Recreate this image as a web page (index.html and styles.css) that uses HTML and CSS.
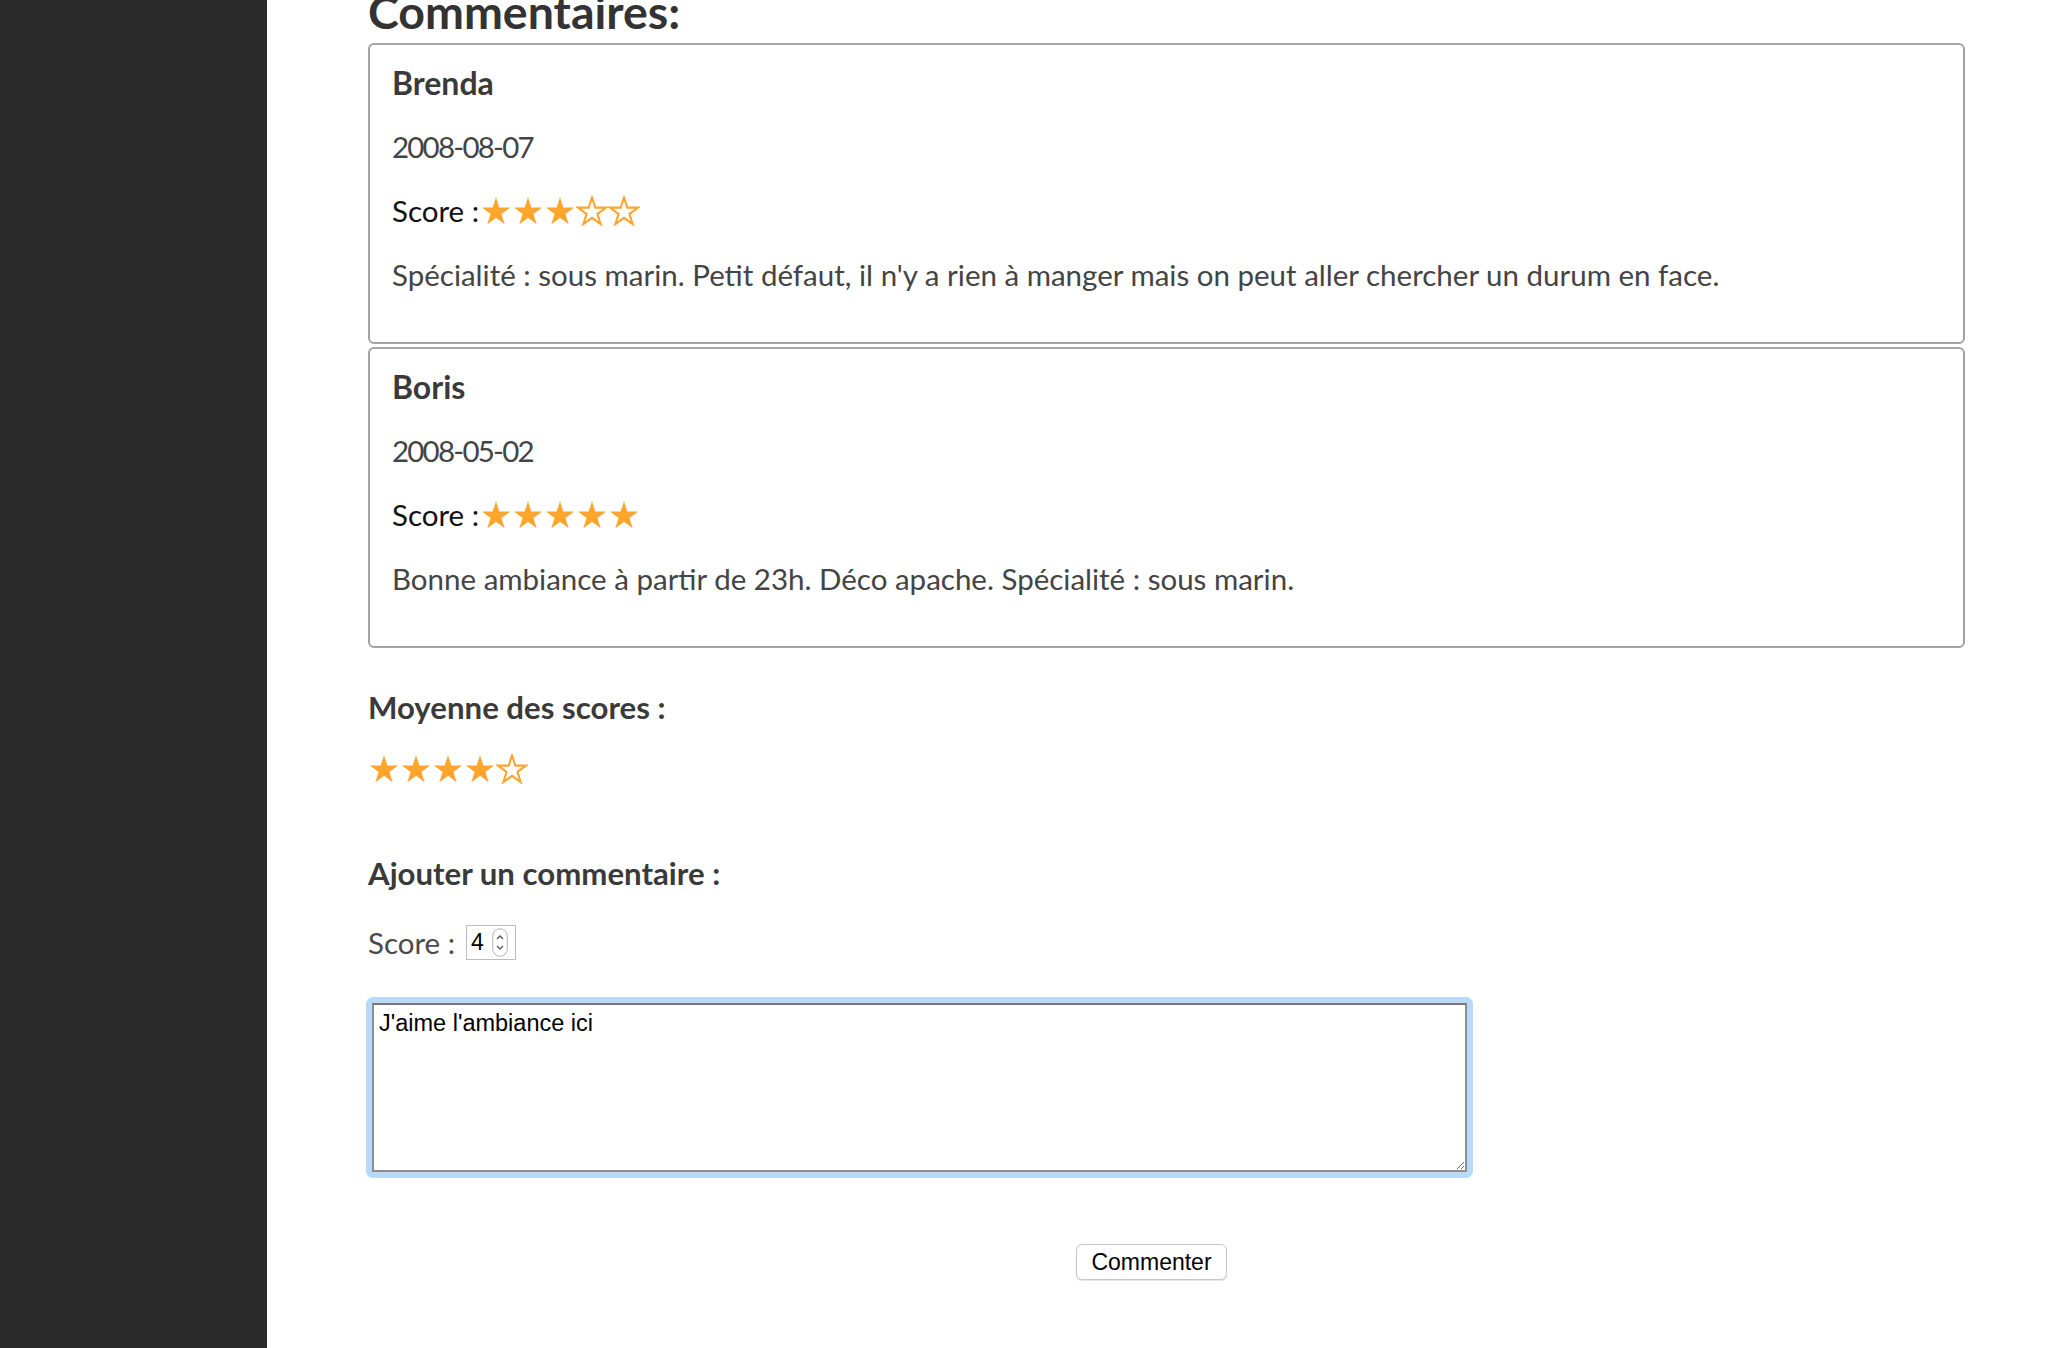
FILE: index.html
```html
<!DOCTYPE html>
<html lang="fr">
<head>
<meta charset="utf-8">
<title>Commentaires</title>
<link rel="stylesheet" href="styles.css">
</head>
<body>
<div class="layout">
  <aside class="sidebar"></aside>
  <main class="main">
    <h2 class="title">Commentaires:</h2>

    <div class="comment">
      <div class="author">Brenda</div>
      <div class="line date">2008-08-07</div>
      <div class="line score">Score :<span class="stars">
        <svg class="star full" viewBox="-4 -4 108 100"><polygon points="50,0 61.23,34.55 97.55,34.55 68.17,55.9 79.39,90.45 50,69.1 20.61,90.45 31.83,55.9 2.45,34.55 38.77,34.55"/></svg><svg class="star full" viewBox="-4 -4 108 100"><polygon points="50,0 61.23,34.55 97.55,34.55 68.17,55.9 79.39,90.45 50,69.1 20.61,90.45 31.83,55.9 2.45,34.55 38.77,34.55"/></svg><svg class="star full" viewBox="-4 -4 108 100"><polygon points="50,0 61.23,34.55 97.55,34.55 68.17,55.9 79.39,90.45 50,69.1 20.61,90.45 31.83,55.9 2.45,34.55 38.77,34.55"/></svg><svg class="star empty" viewBox="-4 -4 108 100"><polygon points="50,0 61.23,34.55 97.55,34.55 68.17,55.9 79.39,90.45 50,69.1 20.61,90.45 31.83,55.9 2.45,34.55 38.77,34.55"/></svg><svg class="star empty" viewBox="-4 -4 108 100"><polygon points="50,0 61.23,34.55 97.55,34.55 68.17,55.9 79.39,90.45 50,69.1 20.61,90.45 31.83,55.9 2.45,34.55 38.77,34.55"/></svg>
      </span></div>
      <div class="line">Spécialité : sous marin. Petit défaut, il n'y a rien à manger mais on peut aller chercher un durum en face.</div>
    </div>

    <div class="comment">
      <div class="author">Boris</div>
      <div class="line date">2008-05-02</div>
      <div class="line score">Score :<span class="stars">
        <svg class="star full" viewBox="-4 -4 108 100"><polygon points="50,0 61.23,34.55 97.55,34.55 68.17,55.9 79.39,90.45 50,69.1 20.61,90.45 31.83,55.9 2.45,34.55 38.77,34.55"/></svg><svg class="star full" viewBox="-4 -4 108 100"><polygon points="50,0 61.23,34.55 97.55,34.55 68.17,55.9 79.39,90.45 50,69.1 20.61,90.45 31.83,55.9 2.45,34.55 38.77,34.55"/></svg><svg class="star full" viewBox="-4 -4 108 100"><polygon points="50,0 61.23,34.55 97.55,34.55 68.17,55.9 79.39,90.45 50,69.1 20.61,90.45 31.83,55.9 2.45,34.55 38.77,34.55"/></svg><svg class="star full" viewBox="-4 -4 108 100"><polygon points="50,0 61.23,34.55 97.55,34.55 68.17,55.9 79.39,90.45 50,69.1 20.61,90.45 31.83,55.9 2.45,34.55 38.77,34.55"/></svg><svg class="star full" viewBox="-4 -4 108 100"><polygon points="50,0 61.23,34.55 97.55,34.55 68.17,55.9 79.39,90.45 50,69.1 20.61,90.45 31.83,55.9 2.45,34.55 38.77,34.55"/></svg>
      </span></div>
      <div class="line">Bonne ambiance à partir de 23h. Déco apache. Spécialité : sous marin.</div>
    </div>

    <h3 class="subhead">Moyenne des scores :</h3>
    <div class="stars avg"><svg class="star full" viewBox="-4 -4 108 100"><polygon points="50,0 61.23,34.55 97.55,34.55 68.17,55.9 79.39,90.45 50,69.1 20.61,90.45 31.83,55.9 2.45,34.55 38.77,34.55"/></svg><svg class="star full" viewBox="-4 -4 108 100"><polygon points="50,0 61.23,34.55 97.55,34.55 68.17,55.9 79.39,90.45 50,69.1 20.61,90.45 31.83,55.9 2.45,34.55 38.77,34.55"/></svg><svg class="star full" viewBox="-4 -4 108 100"><polygon points="50,0 61.23,34.55 97.55,34.55 68.17,55.9 79.39,90.45 50,69.1 20.61,90.45 31.83,55.9 2.45,34.55 38.77,34.55"/></svg><svg class="star full" viewBox="-4 -4 108 100"><polygon points="50,0 61.23,34.55 97.55,34.55 68.17,55.9 79.39,90.45 50,69.1 20.61,90.45 31.83,55.9 2.45,34.55 38.77,34.55"/></svg><svg class="star empty" viewBox="-4 -4 108 100"><polygon points="50,0 61.23,34.55 97.55,34.55 68.17,55.9 79.39,90.45 50,69.1 20.61,90.45 31.83,55.9 2.45,34.55 38.77,34.55"/></svg></div>

    <h3 class="subhead add">Ajouter un commentaire :</h3>
    <form class="form">
      <div class="score-row">
        <label class="score-label">Score :</label>
        <span class="numbox"><span class="numval">4</span><svg class="spin" viewBox="0 0 16 29"><rect x="0.75" y="0.75" width="14.5" height="27.5" rx="7.25" ry="7.25"/><polyline points="5,11 8,8 11,11"/><polyline points="5,18 8,21 11,18"/></svg></span>
      </div>
      <div class="ring"><textarea class="ta">J'aime l'ambiance ici</textarea></div>
      <div class="actions"><button type="button" class="btn">Commenter</button></div>
    </form>
  </main>
</div>
</body>
</html>
```

FILE: styles.css
```css
html, body {
  margin: 0;
  padding: 0;
  background: #ffffff;
}

.layout {
  display: flex;
  min-height: 1348px;
  overflow: hidden;
}

.sidebar {
  flex: 0 0 267px;
  background: #2b2b2b;
}

.main {
  flex: 1;
  padding: 0 91px 0 101px;
  font-family: Lato, "Open Sans", sans-serif;
  color: #444444;
}

.title {
  font-size: 46.5px;
  font-weight: 700;
  line-height: 52px;
  color: #333333;
  margin: -15px 0 6px 0;
}

.comment {
  border: 2px solid #a3a3a3;
  border-radius: 6px;
  padding: 6px 22px 35px 22px;
  margin-bottom: 3px;
}

.author {
  font-size: 32px;
  font-weight: 700;
  line-height: 64px;
  color: #3a3a3a;
}

.line {
  font-size: 29.5px;
  line-height: 64px;
  color: #444444;
}

.date {
  letter-spacing: -1.8px;
}

.score {
  display: flex;
  align-items: center;
  color: #111111;
}

.stars {
  display: inline-flex;
  align-items: center;
  margin-left: 1px;
}

.star {
  width: 32px;
  height: 30px;
  display: block;
}

.star polygon {
  stroke-linejoin: miter;
}

.star.full polygon {
  fill: #ffa42c;
}

.star.empty polygon {
  fill: none;
  stroke: #ffa42c;
  stroke-width: 7;
}

.subhead {
  font-size: 31.2px;
  font-weight: 700;
  line-height: 40px;
  color: #3a3a3a;
  margin: 39px 0 0 0;
}

.stars.avg {
  display: flex;
  margin: 27px 0 0 0;
}

.subhead.add {
  margin-top: 69px;
}

.form {
  margin: 32px 0 0 0;
}

.score-row {
  display: flex;
  align-items: center;
  height: 35px;
}

.score-label {
  font-size: 29.5px;
  line-height: 35px;
  color: #4a4a4a;
  margin-right: 11px;
}

.numbox {
  box-sizing: border-box;
  width: 50px;
  height: 35px;
  border: 1px solid #bdbdbd;
  display: flex;
  align-items: center;
  padding-left: 4px;
  font-family: "Liberation Sans", Arial, sans-serif;
  font-size: 23px;
  color: #000000;
}

.numval {
  width: 21px;
}

.spin {
  width: 16px;
  height: 29px;
  display: block;
}

.spin rect {
  fill: #ffffff;
  stroke: #b4b4b4;
  stroke-width: 1;
}

.spin polyline {
  fill: none;
  stroke: #555555;
  stroke-width: 1.3;
}

.ring {
  box-sizing: border-box;
  width: 1107px;
  height: 181px;
  margin: 37px 0 0 -2px;
  padding: 6px;
  background: #bad8f7;
  border-radius: 7px;
}

.ta {
  box-sizing: border-box;
  display: block;
  width: 100%;
  height: 100%;
  margin: 0;
  border: 2px solid #8e8e8e;
  border-top-color: #777777;
  border-radius: 0;
  padding: 5px 5px;
  font-family: "Liberation Sans", Arial, sans-serif;
  font-size: 23.5px;
  line-height: 26px;
  color: #000000;
  background: #ffffff;
  outline: none;
}

.actions {
  text-align: center;
  padding-right: 30px;
  margin-top: 66px;
}

.btn {
  box-sizing: border-box;
  width: 151px;
  height: 36px;
  padding: 0;
  border: 1px solid #c6c6c6;
  border-radius: 6px;
  background: #ffffff;
  box-shadow: 0 1px 1px rgba(0, 0, 0, 0.12);
  font-family: "Liberation Sans", Arial, sans-serif;
  font-size: 23px;
  line-height: 34px;
  color: #000000;
}
```
